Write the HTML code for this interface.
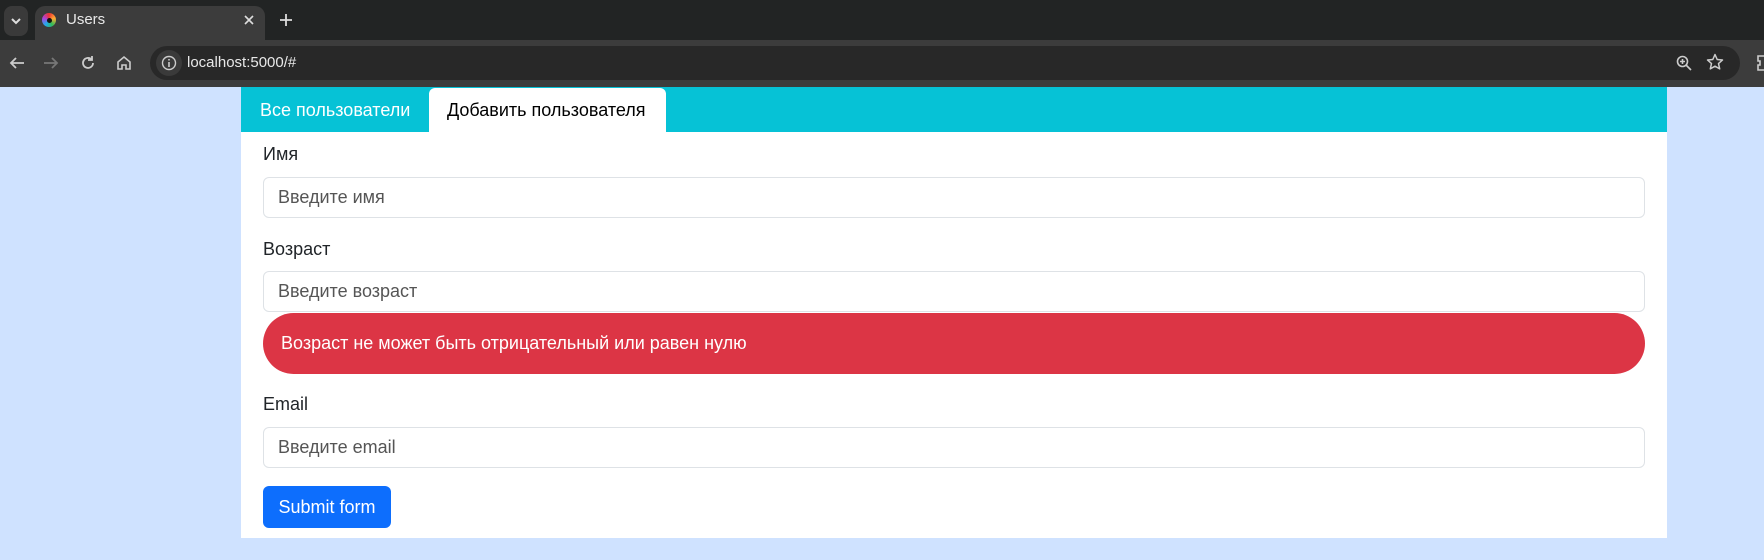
<!DOCTYPE html>
<html><head><meta charset="utf-8"><style>
*{box-sizing:border-box;margin:0;padding:0}
body{width:1764px;height:560px;overflow:hidden;background:#cfe2ff;font-family:"Liberation Sans",sans-serif;position:relative}
.abs{position:absolute}
.top{left:0;top:0;width:1764px;height:40px;background:#222424}
.tb{left:0;top:40px;width:1764px;height:47px;background:#3c3c3c}
.url{left:150px;top:46px;width:1590px;height:34px;border-radius:17px;background:#282828}
.lbl{font-size:18px;color:#212529}
.inp{left:263px;width:1382px;height:41px;border:1px solid #dee2e6;border-radius:6px;background:#fff;font-size:18px;color:#555;padding-left:14px;line-height:39px}
svg{position:absolute}
</style></head><body>
<div class="abs top"></div>
<div class="abs" style="left:4px;top:6px;width:24px;height:30px;border-radius:8px;background:#3a3a3a"></div>
<svg style="left:10px;top:16px" width="12" height="10" viewBox="0 0 12 10"><path d="M2 3l4 4 4-4" stroke="#ddd" stroke-width="2" fill="none"/></svg>
<div class="abs" style="left:35px;top:6px;width:230px;height:36px;border-radius:10px 10px 0 0;background:#3c3c3c"></div>
<div class="abs" style="left:42px;top:13px;width:14px;height:14px;border-radius:50%;background:conic-gradient(#e33,#fa3,#3b5,#2ae,#a4d,#e33)"></div>
<div class="abs" style="left:47px;top:18px;width:5px;height:5px;border-radius:50%;background:#111"></div>
<div class="abs" style="left:66px;top:11px;color:#e8e8e8;font-size:15px">Users</div>
<svg style="left:244px;top:15px" width="10" height="10" viewBox="0 0 10 10"><path d="M1 1l8 8M9 1l-8 8" stroke="#ddd" stroke-width="1.6"/></svg>
<svg style="left:279px;top:13px" width="14" height="14" viewBox="0 0 14 14"><path d="M7 1v12M1 7h12" stroke="#ddd" stroke-width="1.8"/></svg>
<div class="abs tb"></div>
<svg style="left:9px;top:56px" width="16" height="14" viewBox="0 0 16 14"><path d="M15 7H2M7 2L2 7l5 5" stroke="#ccc" stroke-width="1.8" fill="none"/></svg>
<svg style="left:43px;top:56px" width="16" height="14" viewBox="0 0 16 14"><path d="M1 7h13M9 2l5 5-5 5" stroke="#777" stroke-width="1.8" fill="none"/></svg>
<svg style="left:80px;top:55px" width="16" height="16" viewBox="0 0 16 16"><path d="M13 8a5 5 0 1 1-1.5-3.6M12 1v4H8" stroke="#ccc" stroke-width="1.8" fill="none"/></svg>
<svg style="left:116px;top:55px" width="16" height="16" viewBox="0 0 16 16"><path d="M2 7l6-5 6 5v7H10v-4H6v4H2z" stroke="#ccc" stroke-width="1.6" fill="none"/></svg>
<div class="abs url"></div>
<div class="abs" style="left:156px;top:50px;width:26px;height:26px;border-radius:50%;background:#3a3a3a"></div>
<svg style="left:161px;top:55px" width="16" height="16" viewBox="0 0 16 16"><circle cx="8" cy="8" r="6.5" stroke="#ccc" stroke-width="1.4" fill="none"/><path d="M8 7v5M8 4v1.5" stroke="#ccc" stroke-width="1.6"/></svg>
<div class="abs" style="left:187px;top:54px;color:#e8e8e8;font-size:15px">localhost:5000/#</div>
<svg style="left:1676px;top:55px" width="16" height="16" viewBox="0 0 16 16"><circle cx="6.5" cy="6.5" r="5" stroke="#ccc" stroke-width="1.6" fill="none"/><path d="M10 10l5 5M6.5 4v5M4 6.5h5" stroke="#ccc" stroke-width="1.6"/></svg>
<svg style="left:1706px;top:53px" width="18" height="18" viewBox="0 0 18 18"><path d="M9 1.5l2.2 5 5.3.5-4 3.6 1.2 5.3L9 13.2l-4.7 2.7 1.2-5.3-4-3.6 5.3-.5z" stroke="#ccc" stroke-width="1.5" fill="none" stroke-linejoin="round"/></svg>
<svg style="left:1756px;top:54px" width="8" height="18" viewBox="0 0 8 18"><path d="M8 2H2v5h2v4H2v5h6" stroke="#ccc" stroke-width="1.6" fill="none"/></svg>

<div class="abs" style="left:241px;top:87px;width:1426px;height:45px;background:#06c2d6"></div>
<div class="abs" style="left:241px;top:132px;width:1426px;height:406px;background:#fff"></div>
<div class="abs" style="left:260px;top:100px;color:#fff;font-size:18px">Все пользователи</div>
<div class="abs" style="left:429px;top:88px;width:237px;height:44px;background:#fff;border-radius:6px 6px 0 0"></div>
<div class="abs" style="left:447px;top:100px;color:#000;font-size:18px">Добавить пользователя</div>

<div class="abs lbl" style="left:263px;top:144px">Имя</div>
<div class="abs inp" style="top:177px">Введите имя</div>
<div class="abs lbl" style="left:263px;top:239px">Возраст</div>
<div class="abs inp" style="top:271px">Введите возраст</div>
<div class="abs" style="left:263px;top:313px;width:1382px;height:61px;border-radius:31px;background:#dc3545;color:#fff;font-size:18px;padding-left:18px;line-height:61px">Возраст не может быть отрицательный или равен нулю</div>
<div class="abs lbl" style="left:263px;top:394px">Email</div>
<div class="abs inp" style="top:427px">Введите email</div>
<div class="abs" style="left:263px;top:486px;width:128px;height:42px;border-radius:6px;background:#0d6efd;color:#fff;font-size:18px;text-align:center;line-height:42px">Submit form</div>
</body></html>
